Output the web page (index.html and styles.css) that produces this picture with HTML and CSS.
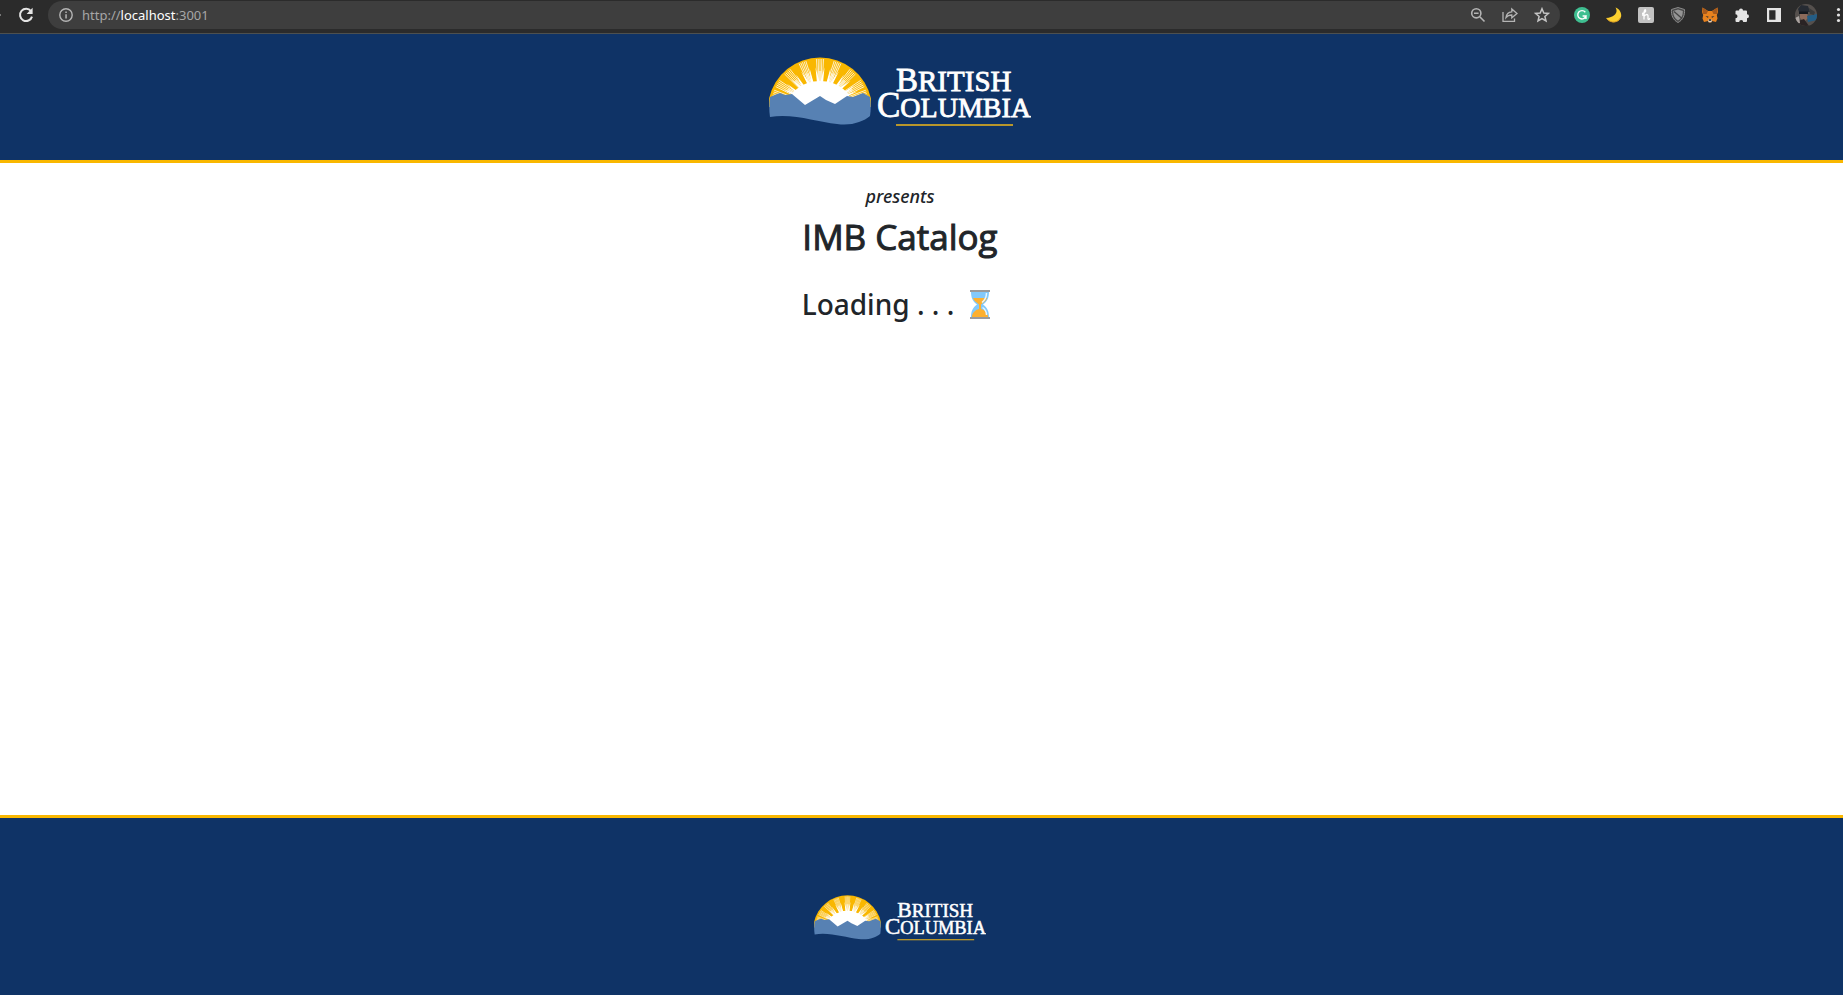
FILE: index.html
```html
<!DOCTYPE html>
<html lang="en">
<head>
<meta charset="utf-8">
<meta name="viewport" content="width=device-width, initial-scale=1">
<title>IMB Catalog</title>
<link rel="stylesheet" href="styles.css">
</head>
<body>
<svg class="defs" aria-hidden="true">
  <defs>
    <clipPath id="dome"><path d="M0 41.500 A52.200 52.200 0 0 1 102 41.500 V50 H0Z"/></clipPath>
    <g id="streaks" stroke="#fff" stroke-width=".7" fill="none">
      <path d="M-3.6-49 -2.2-26M-1.8-49 -1.1-26M0-49V-26M1.8-49 1.1-26M3.6-49 2.2-26"/>
    </g>
    <g id="spikes" fill="#fff">
      <path d="M-4.5-24 -3-41 -1.5-24ZM1.5-24 3-41 4.5-24Z" transform="rotate(10.5)"/>
      <path d="M-2.4-20 -1.6-37 1.6-37 2.4-20Z" opacity=".55"/>
    </g>
    <symbol id="bc-logo" viewBox="0 0 262 70">
      <g clip-path="url(#dome)">
        <rect width="102" height="62" fill="#f9b700"/>
        <g transform="translate(51 51)">
          <ellipse rx="33" ry="27" fill="#fff"/>
          <use href="#streaks"/><use href="#streaks" transform="rotate(21)"/><use href="#streaks" transform="rotate(42)"/><use href="#streaks" transform="rotate(60)"/><use href="#streaks" transform="rotate(73)"/>
          <use href="#streaks" transform="rotate(-21)"/><use href="#streaks" transform="rotate(-42)"/><use href="#streaks" transform="rotate(-60)"/><use href="#streaks" transform="rotate(-73)"/>
          <use href="#spikes"/><use href="#spikes" transform="rotate(21)"/><use href="#spikes" transform="rotate(42)"/><use href="#spikes" transform="rotate(60)"/>
          <use href="#spikes" transform="rotate(-21)"/><use href="#spikes" transform="rotate(-42)"/><use href="#spikes" transform="rotate(-60)"/><use href="#spikes" transform="rotate(-78)"/>
        </g>
      </g>
      <path fill="#5781b3" d="M1 40 8 37 11 36 16 38 23 37 36 48 51 39 57 43 66 47 78 39 84 40 94 36 101 40C102 46 102 53 101 59C94 65 82 69 68 67C48 65 24 56 1 60C0 53 0 47 1 40Z"/>
      <g class="wordmark" fill="#fff" stroke="#fff" stroke-width=".8">
        <text x="127" y="34" font-size="33">B<tspan font-size="29">RITISH</tspan></text>
        <text x="108" y="60" font-size="35">C<tspan font-size="28">OLUMBIA</tspan></text>
      </g>
      <rect x="127" y="67" width="117" height="2" fill="#b8962b"/>
    </symbol>
  </defs>
</svg>

<div class="toolbar">
  <span class="edge-arrow"></span>
  <button class="tool" aria-label="Reload"><svg width="16" height="16" viewBox="0 0 16 16"><path d="M13 4.2A6.1 6.1 0 1 0 14 9.6" fill="none" stroke="#e4e4e4" stroke-width="2"/><path d="M14.6.8V7H8.6Z" fill="#e4e4e4"/></svg></button>
  <div class="address">
    <svg width="14" height="14" viewBox="0 0 14 14"><circle cx="7" cy="7" r="6.2" fill="none" stroke="#b4b4b4" stroke-width="1.4"/><path d="M6.3 6.2h1.5v4.2H6.3zM6.3 3.6h1.5v1.5H6.3z" fill="#b4b4b4"/></svg>
    <div class="url" role="textbox" aria-label="Address">http://<span class="host">localhost</span>:3001</div>
    <button class="tool" aria-label="Zoom"><svg width="16" height="16" viewBox="0 0 16 16" fill="none" stroke="#b4b4b4" stroke-width="1.6"><circle cx="6.3" cy="6.3" r="4.6"/><path d="M9.8 9.8 14.5 14.5M4 6.3h4.6"/></svg></button>
    <button class="tool" aria-label="Share"><svg width="16" height="16" viewBox="0 0 16 16" fill="none" stroke="#b4b4b4" stroke-width="1.3"><path d="M1 5v9.4h11.5v-3"/><path d="M4 10.5C4.400 6.500 6.500 5 9.800 4.800V2L15 6.400 9.800 10.800V8C7 8 5.300 8.800 4 10.500Z"/></svg></button>
    <button class="tool" aria-label="Bookmark"><svg width="16" height="16" viewBox="0 0 16 16"><path d="M8 1.700 9.800 6 14.500 6.400 10.900 9.500 12 14 8 11.600 4 14 5.100 9.500 1.500 6.400 6.200 6Z" fill="none" stroke="#c4c4c4" stroke-width="1.5"/></svg></button>
  </div>
  <div class="extensions">
    <button class="tool" aria-label="Grammar"><svg width="16" height="16" viewBox="0 0 16 16"><circle cx="8" cy="8" r="8" fill="#3fbf91"/><path d="M11.300 5.200A4.200 4.200 0 1 0 12 9H8.600M12 8.500V12" fill="none" stroke="#fff" stroke-width="1.400"/></svg></button>
    <button class="tool" aria-label="Dark mode"><svg width="16" height="16" viewBox="0 0 16 16"><path d="M9.500.500C12 4 10.500 10 0 11C4 17 13 16.500 15 10C16 6 13.500 2 9.500.500Z" fill="#fbd02f"/><path d="M1 11.800C5 16.500 12 16 14.500 10.500" fill="none" stroke="#d99a23"/></svg></button>
    <button class="tool" aria-label="Coupons"><svg width="16" height="16" viewBox="0 0 16 16"><rect width="16" height="16" rx="2" fill="#c2c2c2"/><path d="M4 6.500C6 6.500 8.500 4.500 7.500 3C6.500 2 6 5 6 7V12.500M6 9.500C7 7.500 10 6.500 10 9V11.500C10 13 11.500 12.500 12 11M4 8H6" fill="none" stroke="#fff" stroke-width="1.300"/></svg></button>
    <button class="tool" aria-label="Blocker"><svg width="16" height="16" viewBox="0 0 16 16"><path d="M8 .5 14.500 2.500C15 8 13 13 8 15.500C3 13 1 8 1.500 2.500Z" fill="#4a4a4a" stroke="#8c8c8c"/><path d="M8 2.500 12.800 4C13 8 11.500 11.500 8 13.500C4.500 11.500 3 8 3.200 4Z" fill="#949494"/><path d="M4 4.500 12 11.500" stroke="#444" stroke-width="1.300"/></svg></button>
    <button class="tool" aria-label="Wallet"><svg width="16" height="16" viewBox="0 0 16 16"><path d="M.5.500 6 4H10L15.500.500 16 5 14.800 8 15.500 11.500 14 15 10 14 9 15.500H7L6 14 2 15 .5 11.500 1.200 8 0 5Z" fill="#e8821e"/><path d="M.5.500 6 4 4.500 7 .8 7ZM15.500.500 10 4 11.500 7 15.200 7Z" fill="#a85a1c"/><path d="M3.500 9 6.500 9.500 6 11ZM12.500 9 9.500 9.500 10 11Z" fill="#3a3431"/><path d="M6 12.500H10L9.500 15.200H6.500Z" fill="#ddd0c5"/><path d="M6.800 12.300H9.200V13.800H6.800Z" fill="#222"/></svg></button>
    <button class="tool" aria-label="Extensions"><svg width="16" height="16" viewBox="0 0 16 16"><path d="M5 3.500A2 2 0 0 1 9 3.500H12Q13 3.500 13 4.500V7.300A2 2 0 0 1 13 11.300V14Q13 15 12 15H9.200A2 2 0 0 0 5.200 15H2.500Q1.500 15 1.500 14V11.200A2 2 0 0 0 1.500 7.200V4.500Q1.500 3.500 2.500 3.500Z" fill="#e4e4e4"/></svg></button>
    <button class="tool" aria-label="Side panel"><svg width="16" height="16" viewBox="0 0 16 16"><path d="M1 1H15V15H1ZM3.200 3.200V12.800H9.500V3.200Z" fill="#e4e4e4" fill-rule="evenodd"/></svg></button>
    <button class="tool" aria-label="Profile"><svg width="22" height="22" viewBox="0 0 22 22"><clipPath id="face"><circle cx="11" cy="11" r="11"/></clipPath><g clip-path="url(#face)"><rect width="22" height="22" fill="#55504d"/><path d="M3 5 6 1 13 2 15 8H4Z" fill="#262b33"/><path d="M5 8H12L13 14 9 18 5 14Z" fill="#8b6a5b"/><path d="M4 7.500H13V10H4Z" fill="#15191f"/><path d="M12 12 22 10V16L13 18Z" fill="#235d85"/><path d="M3 17 9 15 14 22H3Z" fill="#2a2324"/><path d="M0 14 4 12 5 19 2 20Z" fill="#aaa3a0"/><path d="M14 4 20 8 19 11 15 10Z" fill="#393b3b"/></g></svg></button>
  </div>
  <button class="tool menu" aria-label="Menu"><svg width="10" height="16" viewBox="0 0 10 16" fill="#e4e4e4"><circle cx="5.500" cy="2.500" r="1.600"/><circle cx="5.500" cy="8" r="1.600"/><circle cx="5.500" cy="13.500" r="1.600"/></svg></button>
</div>

<header class="banner"><svg class="logo" role="img" aria-label="British Columbia"><use href="#bc-logo"/></svg></header>

<main class="content">
  <p class="presents">presents</p>
  <h1 class="title">IMB Catalog</h1>
  <h2 class="loading">Loading . . .
    <svg class="hourglass" viewBox="0 0 20 29" aria-hidden="true"><path d="M1 1H19C19 8 17.500 11 13 14.500C17.500 18 19 21 19 28H1C1 21 2.500 18 7 14.500C2.500 11 1 8 1 1Z" fill="#82c9fb"/><path d="M3 8H17C16 11 14 12 11 14.500V19C15 20 18 23 18 27H2C2 23 5 20 9 19V14.500C6 12 4 11 3 8Z" fill="#fdb02f"/><path d="M16.500 3C16.500 7 15 10 12 12.500M12.500 17.500C15.500 19.500 16.500 22 16.500 25" fill="none" stroke="#e8f6ff" stroke-width="1.500"/><path d="M0 0H20V2H0ZM0 27H20V29H0Z" fill="#9b9b9b"/></svg>
  </h2>
</main>

<footer class="footer"><svg class="logo logo-small" role="img" aria-label="British Columbia"><use href="#bc-logo"/></svg></footer>
</body>
</html>
```
FILE: styles.css
```css
* { box-sizing: border-box; }

body {
  margin: 0;
  min-height: 100vh;
  display: flex;
  flex-direction: column;
  overflow-x: hidden;
  background: #fff;
  color: #212529;
  font-family: "Noto Sans", "Open Sans", sans-serif;
}

.defs {
  position: absolute;
  width: 0;
  height: 0;
}

.toolbar {
  display: flex;
  align-items: center;
  gap: 6px;
  height: 34px;
  padding-bottom: 3px;
  background: #2b2b2b;
  border-bottom: 1px solid #4d504f;
}

.edge-arrow {
  width: 4px;
  height: 2px;
  border-right: 3px solid #2b2b2b;
  background: #777;
}

.tool {
  display: flex;
  flex: none;
  align-items: center;
  justify-content: center;
  width: 32px;
  height: 28px;
  padding: 0;
  border: 0;
  background: none;
}

.menu {
  width: 21px;
  margin-left: -6px;
  justify-content: flex-end;
}

.address {
  display: flex;
  flex: 1;
  align-items: center;
  height: 28px;
  padding: 0 2px 0 11px;
  border-radius: 14px;
  background: #3e3e3e;
}

.url {
  flex: 1;
  padding-left: 9px;
  font-size: 13px;
  line-height: 18px;
  color: #a6a6a6;
}

.host { color: #fff; }

.extensions { display: flex; }

.banner,
.footer {
  display: flex;
  justify-content: center;
  padding-right: 43px;
  background: #0f3366;
}

.banner {
  padding-top: 23px;
  padding-bottom: 33px;
  border-bottom: 3px solid #f9b700;
}

.logo {
  width: 262px;
  height: 70px;
}

.logo-small {
  width: 172px;
  height: 46px;
}

.wordmark { font-family: "Liberation Serif", serif; }

.content {
  flex: 1;
  padding: 21px 43px 0 0;
  text-align: center;
}

.presents {
  margin: 0;
  font-size: 18px;
  font-style: italic;
  font-weight: 500;
  line-height: 24px;
}

.title {
  margin: 7px 0 27px;
  font-family: "Open Sans", "Noto Sans", sans-serif;
  font-size: 35px;
  font-weight: 500;
  line-height: 44px;
  -webkit-text-stroke: 1px currentColor;
}

.loading {
  display: flex;
  align-items: center;
  justify-content: center;
  gap: 16px;
  margin: 0;
  padding-right: 8px;
  font-size: 28px;
  font-weight: 500;
  line-height: 36px;
}

.hourglass {
  width: 20px;
  height: 29px;
}

.footer {
  height: 180px;
  padding-top: 77px;
  border-top: 3px solid #f9b700;
}
```
